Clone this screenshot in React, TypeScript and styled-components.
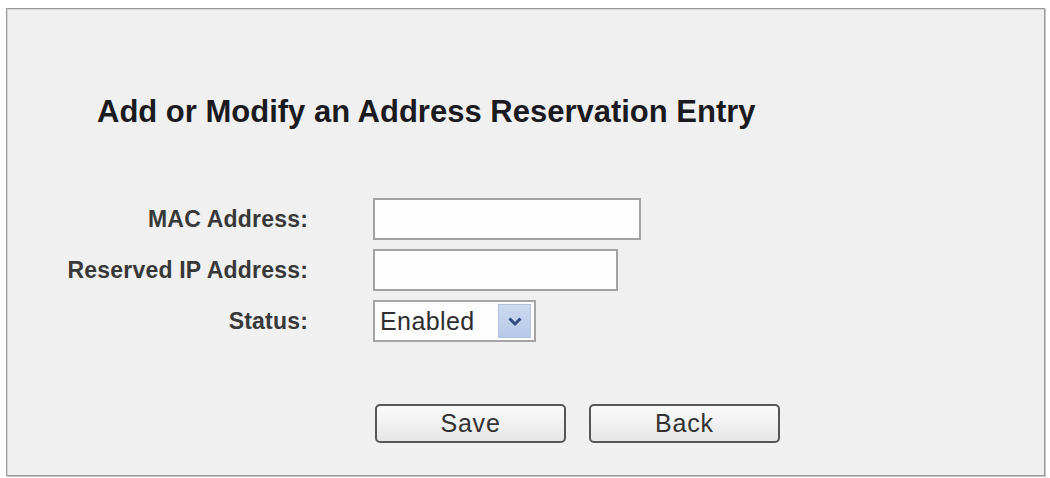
import React from "react";
import styled, { createGlobalStyle } from "styled-components";

const GlobalStyle = createGlobalStyle`
    html, body {
        margin: 0;
        padding: 0;
        background: #ffffff;
    }
    body {
        font-family: "Liberation Sans", Arial, sans-serif;
    }
`;

const Page = styled.div`
    width: 1050px;
    height: 478px;
    box-sizing: border-box;
    padding: 8px 5px 2px 6px;
`;

const Panel = styled.div`
    height: 100%;
    box-sizing: border-box;
    background: #f0f0f0;
    border: 1px solid #9c9c9c;
    box-shadow: inset 1px 1px 0 #d6d6d6, 1px 1px 0 #c4c4c4;
    padding: 85px 0 0 1px;
    display: flex;
    flex-direction: column;
`;

const Title = styled.h1`
    margin: 0 0 0 89px;
    font-size: 31px;
    line-height: 36px;
    font-weight: 700;
    color: #1b1b1f;
`;

const Form = styled.div`
    margin-top: 68px;
    display: grid;
    grid-template-columns: 300px auto;
    column-gap: 65px;
    row-gap: 9px;
    align-items: center;
`;

const Label = styled.label`
    text-align: right;
    font-size: 23px;
    font-weight: 700;
    color: #383838;
    letter-spacing: 0.2px;
`;

const TextInput = styled.input<{ w: number }>`
    width: ${(p) => p.w}px;
    height: 42px;
    box-sizing: border-box;
    border: 2px solid #a2a2a2;
    background: #fdfdfe;
    outline: none;
    padding: 0 6px;
    font-family: inherit;
    font-size: 22px;
`;

const Select = styled.div`
    width: 163px;
    height: 42px;
    box-sizing: border-box;
    border: 2px solid #a5a5a5;
    background: #fdfdfd;
    display: flex;
    align-items: center;
    justify-content: space-between;
    padding: 2px 3px 2px 5px;
    font-size: 25px;
    letter-spacing: 0.4px;
    color: #2e2e2e;
`;

const ArrowBox = styled.span`
    width: 33px;
    height: 100%;
    display: flex;
    align-items: center;
    justify-content: center;
    background: linear-gradient(#cbd9ef, #b7c9e8);
    border: 1px solid #b4c4dc;
    box-sizing: border-box;
`;

const Buttons = styled.div`
    margin: 62px 0 0 367px;
    display: flex;
    gap: 23px;
`;

const Button = styled.button`
    width: 191px;
    height: 39px;
    box-sizing: border-box;
    border: 2px solid #565656;
    border-radius: 5px;
    background: linear-gradient(#fbfbfb, #e6e6e6);
    font-family: inherit;
    font-size: 25px;
    letter-spacing: 0.8px;
    color: #333333;
    padding: 0;
    cursor: pointer;
`;

const Chevron = () => (
    <svg width="16" height="11" viewBox="0 0 16 11">
        <path d="M2.5 2.5 L8 8 L13.5 2.5" fill="none" stroke="#2f4d7c" strokeWidth="3" />
    </svg>
);

const App = () => {
    return (
        <Page>
            <GlobalStyle />
            <Panel>
                <Title>Add or Modify an Address Reservation Entry</Title>
                <Form>
                    <Label>MAC Address:</Label>
                    <TextInput w={268} />
                    <Label>Reserved IP Address:</Label>
                    <TextInput w={245} />
                    <Label>Status:</Label>
                    <Select>
                        <span>Enabled</span>
                        <ArrowBox>
                            <Chevron />
                        </ArrowBox>
                    </Select>
                </Form>
                <Buttons>
                    <Button type="button">Save</Button>
                    <Button type="button">Back</Button>
                </Buttons>
            </Panel>
        </Page>
    );
};

export default App;
